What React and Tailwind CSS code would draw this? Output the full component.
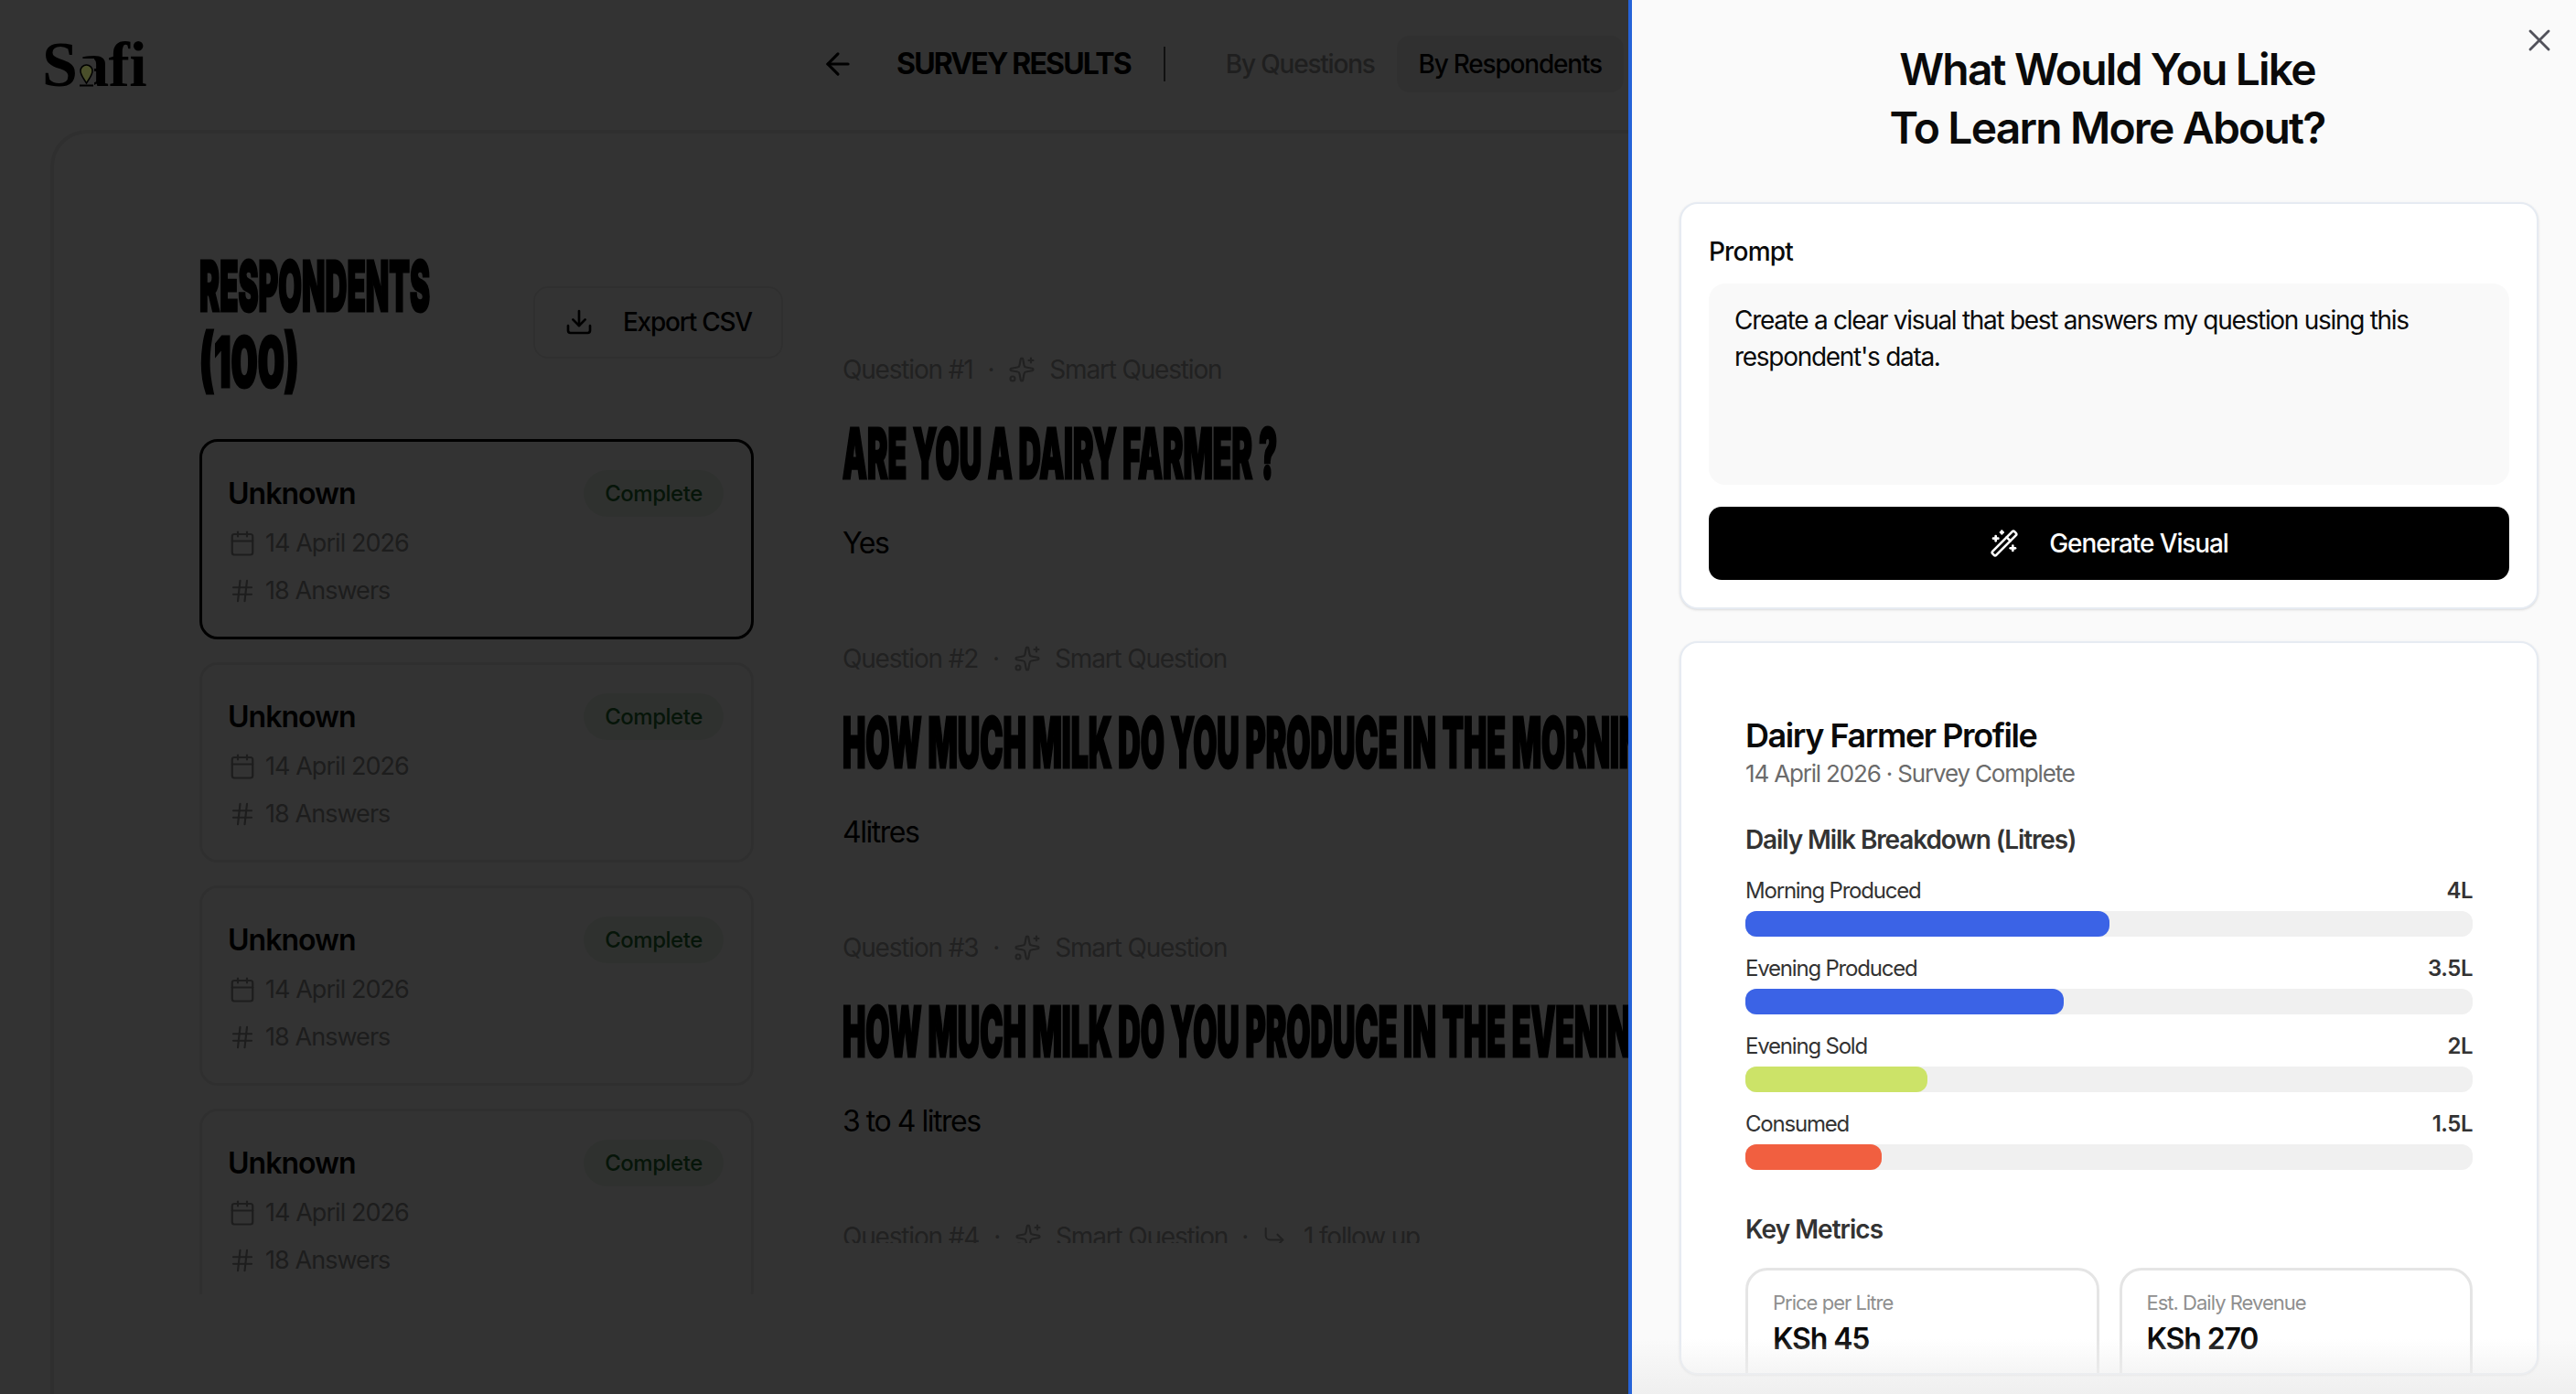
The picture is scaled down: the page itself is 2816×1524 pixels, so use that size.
import { ArrowLeft, Calendar, CornerDownRight, Download, Hash, Sparkles, WandSparkles, X } from "lucide-react";

const questions = [
  { id: 1, title: "ARE YOU A DAIRY FARMER ?", answer: "Yes" },
  { id: 2, title: "HOW MUCH MILK DO YOU PRODUCE IN THE MORNING ?", answer: "4litres" },
  { id: 3, title: "HOW MUCH MILK DO YOU PRODUCE IN THE EVENING ?", answer: "3 to 4 litres" },
  { id: 4, title: "HOW MUCH OF THE MILK DO YOU SELL ?", answer: "2 litres", followUp: true },
];

const bars = [
  { label: "Morning Produced", value: "4L", width: "50%", color: "bg-[#3b63e6]" },
  { label: "Evening Produced", value: "3.5L", width: "43.75%", color: "bg-[#3b63e6]" },
  { label: "Evening Sold", value: "2L", width: "25%", color: "bg-[#cce368]" },
  { label: "Consumed", value: "1.5L", width: "18.75%", color: "bg-[#f15f40]" },
];

const metrics = [
  { label: "Price per Litre", value: "KSh 45" },
  { label: "Est. Daily Revenue", value: "KSh 270" },
];

function RespondentCard({ active }) {
  return (
    <div
      className={`h-[219px] shrink-0 rounded-[20px] border-[3px] pr-[30px] pl-[28px] pt-[31px] ${active ? "border-black" : "border-[#ececec]"}`}
    >
      <div className="flex items-center justify-between">
        <span className="text-[32px] leading-[44px] font-semibold tracking-[-0.03em] text-black">Unknown</span>
        <span className="flex h-[51px] w-[153px] items-center justify-center rounded-full bg-[#ecf5ec] text-[24px] font-medium tracking-[-0.02em] text-[#1f6b2e]">
          Complete
        </span>
      </div>
      <div className="mt-[9px] flex h-10 items-center gap-[10px] text-[27px] tracking-[-0.035em] text-[#8f8f8f]">
        <Calendar size={30} strokeWidth={1.75} className="ml-[1px]" />
        <span>14 April 2026</span>
      </div>
      <div className="mt-[12px] flex h-10 items-center gap-[10px] text-[27px] tracking-[-0.035em] text-[#8f8f8f]">
        <Hash size={30} strokeWidth={1.75} className="ml-[1px]" />
        <span>18 Answers</span>
      </div>
    </div>
  );
}

function QuestionBlock({ q }) {
  return (
    <div className="shrink-0 pb-[86px]">
      <div className="flex h-10 items-center text-[28px] tracking-[-0.042em] text-[#a3a3a3]">
        <span>Question #{q.id}</span>
        <span className="mx-4">·</span>
        <Sparkles size={30} strokeWidth={1.75} />
        <span className="ml-[15px]">Smart Question</span>
        {q.followUp && (
          <>
            <span className="mx-[15px]">·</span>
            <CornerDownRight size={28} strokeWidth={1.75} />
            <span className="ml-[18px]">1 follow up</span>
          </>
        )}
      </div>
      <div className="mt-[31px] h-20 origin-left scale-x-[0.445] whitespace-nowrap text-[76px] leading-[80px] font-black text-black [-webkit-text-stroke:3px_black]">
        {q.title}
      </div>
      <div className="mt-[39px] h-10 text-[32px] leading-10 tracking-[-0.046em] text-black">{q.answer}</div>
    </div>
  );
}

export default function App() {
  return (
    <div className="relative flex h-screen w-full flex-col overflow-hidden bg-white font-['Inter',sans-serif]">
      <header className="flex h-[142px] shrink-0 items-center pb-[3px] pl-[46px]">
        <div className="mt-[3px] w-[851px] font-['Liberation_Serif',serif] text-[70px] leading-none font-bold tracking-[-0.01em] text-black">
          Safi
        </div>
        <ArrowLeft size={38} strokeWidth={2} className="text-black" />
        <span className="ml-[45px] text-[32px] font-bold tracking-[-0.057em] text-black">SURVEY RESULTS</span>
        <div className="ml-[36px] h-[38px] w-[2px] bg-[#555]" />
        <span className="ml-[66px] text-[28px] font-medium tracking-[-0.043em] text-[#9a9a9a]">By Questions</span>
        <span className="ml-[24px] flex h-[62px] w-[248px] items-center justify-center rounded-[14px] bg-[#f0f0f0] text-[28px] font-medium tracking-[-0.043em] text-black">
          By Respondents
        </span>
      </header>

      <main className="ml-[55px] flex min-h-0 flex-1 rounded-tl-[40px] border-t-4 border-l-4 border-[#e8e8e8] pl-[159px]">
        <section className="flex w-[638px] shrink-0 flex-col pt-[126px]">
          <div className="flex h-40 items-center justify-between">
            <div className="w-[300px] text-[76px] leading-[80px] font-black text-black [-webkit-text-stroke:3px_black]">
              <div className="origin-left scale-x-[0.436]">RESPONDENTS</div>
              <div className="-mb-[3px] mt-[3px] origin-left scale-x-[0.54]">(100)</div>
            </div>
            <div className="flex h-[79px] w-[273px] shrink-0 items-center gap-8 rounded-[16px] border-2 border-[#ececec] pl-[32px] text-[28px] font-medium tracking-[-0.045em] text-black">
              <Download size={32} strokeWidth={2} />
              <span>Export CSV</span>
            </div>
          </div>
          <div className="mt-12 flex h-[935px] w-[606px] flex-col gap-[25px] overflow-hidden">
            <RespondentCard active />
            <RespondentCard />
            <RespondentCard />
            <RespondentCard />
          </div>
        </section>

        <section className="ml-[65px] h-[1213px] min-w-0 flex-1 overflow-hidden pt-[238px]">
          {questions.map((q) => (
            <QuestionBlock key={q.id} q={q} />
          ))}
        </section>
      </main>

      {/* dim layer */}
      <div className="absolute inset-0 bg-black/80" />

      {/* logo pin sits where the a's bowl would be */}
      <svg className="absolute top-[64px] left-[84px]" width="20" height="32" viewBox="0 0 20 32">
        <rect x="0" y="0" width="19" height="32" fill="#333333" />
        <path d="M10.5 27C7 21 4 18 4 13.5a6.5 6.5 0 0 1 13 0C17 18 14 21 10.5 27Z" fill="#4a4f2a" stroke="#000" strokeWidth="1.5" />
        <path d="M3 29.5h15" stroke="#000" strokeWidth="2" />
      </svg>

      <aside className="absolute top-0 right-0 bottom-0 flex w-[1036px] flex-col border-l-4 border-[#2563d8] bg-[#fafafa] pr-[41px] pl-[52px]">
        <X size={40} strokeWidth={1.75} className="absolute top-[24px] right-[20px] text-[#52525b]" />
        <h2 className="mt-11 -translate-x-[2px] text-center text-[48px] leading-16 font-semibold tracking-[-0.038em] text-[#0a0a0a]">
          What Would You Like
          <br />
          To Learn More About?
        </h2>

        <div className="mt-[49px] h-[445px] shrink-0 rounded-[20px] border-2 border-[#e6ebf2] bg-white px-[30px] pt-8 shadow-sm">
          <div className="text-[28px] leading-10 font-medium tracking-[-0.03em] text-[#0a0a0a]">Prompt</div>
          <div className="mt-[15px] h-[220px] rounded-[18px] bg-[#f9f9f9] px-7 pt-5 text-[28px] leading-10 tracking-[-0.046em] text-[#0a0a0a]">
            Create a clear visual that best answers my question using this respondent's data.
          </div>
          <div className="mt-6 flex h-20 items-center justify-center gap-[33px] rounded-[14px] bg-black text-[28px] font-medium tracking-[-0.04em] text-white">
            <WandSparkles size={32} strokeWidth={2} />
            <span>Generate Visual</span>
          </div>
        </div>

        <div className="mt-[35px] mb-[21px] min-h-0 flex-1 overflow-hidden rounded-[20px] border-2 border-[#e6ebf2] bg-white px-[70px] pt-[77px] shadow-sm">
          <div className="text-[36px] leading-12 font-semibold tracking-[-0.04em] text-[#0a0a0a]">Dairy Farmer Profile</div>
          <div className="text-[26px] leading-9 tracking-[-0.045em] text-[#6b6b6b]">14 April 2026 · Survey Complete</div>
          <div className="mt-[34px] text-[28px] leading-10 font-semibold tracking-[-0.04em] text-[#333]">
            Daily Milk Breakdown (Litres)
          </div>
          <div className="mt-[18px] flex flex-col gap-[17px]">
            {bars.map((b) => (
              <div key={b.label}>
                <div className="flex h-[34px] items-center justify-between pt-[1px] text-[24px] tracking-[-0.05em] text-[#333]">
                  <span>{b.label}</span>
                  <span className="font-semibold tracking-[-0.02em]">{b.value}</span>
                </div>
                <div className="mt-[6px] h-7 rounded-[12px] bg-[#f0f0f0]">
                  <div className={`h-7 rounded-[12px] ${b.color}`} style={{ width: b.width }} />
                </div>
              </div>
            ))}
          </div>
          <div className="mt-[45px] text-[28px] leading-10 font-semibold tracking-[-0.035em] text-[#333]">Key Metrics</div>
          <div className="mt-[22px] grid grid-cols-2 gap-[22px]">
            {metrics.map((m) => (
              <div key={m.label} className="h-[150px] rounded-[24px] border-[3px] border-[#e5e5e5] px-[27px] pt-[19px]">
                <div className="text-[22px] leading-8 tracking-[-0.045em] text-[#8f8f8f]">{m.label}</div>
                <div className="mt-[2px] text-[32px] leading-11 font-semibold tracking-[-0.035em] text-[#0a0a0a]">{m.value}</div>
              </div>
            ))}
          </div>
        </div>

        <div className="absolute right-0 bottom-0 left-0 h-[60px] bg-gradient-to-b from-transparent to-[#efefef]" />
      </aside>
    </div>
  );
}
